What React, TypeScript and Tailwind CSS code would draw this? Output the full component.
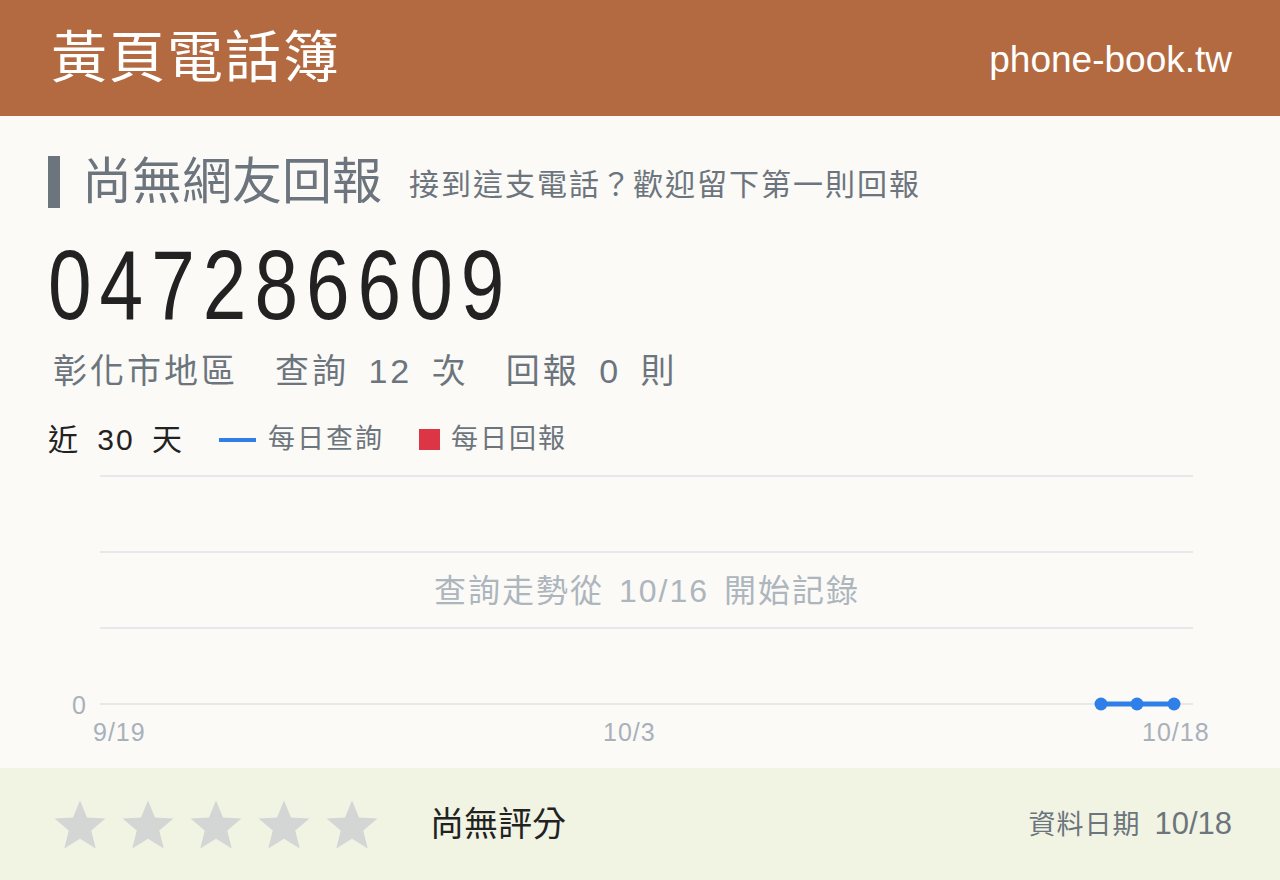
import React from "react";

const FONT = "font-['Liberation_Sans','Noto_Sans_CJK_TC',sans-serif]";

function Star() {
  return (
    <svg viewBox="0 0 24 24" className="w-[56px] h-[54px]" fill="#d4d6d5">
      <path d="M12 1.5l3.1 7.6 8.2.5-6.3 5.3 2 8-7-4.4-7 4.4 2-8L.7 9.6l8.2-.5z" />
    </svg>
  );
}

export default function App() {
  return (
    <div className={`w-[1280px] h-[880px] flex flex-col bg-[#fbfaf6] ${FONT}`}>
      <header className="h-[116px] shrink-0 bg-[#b46a40] flex items-center justify-between px-[48px]">
        <h1 className="text-[56px] text-white pl-[3px] tracking-[2px]">黃頁電話簿</h1>
        <span className="mt-[4px] text-[37px] text-white">phone-book.tw</span>
      </header>

      <main className="flex-1 px-[48px] pt-[38px]">
        <div className="flex items-center">
          <div className="w-[12px] h-[52px] bg-[#6c757d]" />
          <h2 className="ml-[22px] text-[50px] leading-[56px] text-[#6c757d]">尚無網友回報</h2>
          <p className="ml-[27px] mt-[4px] text-[30px] tracking-[2px] text-[#6c757d]">接到這支電話？歡迎留下第一則回報</p>
        </div>

        <div className="mt-[20px] h-[110px] text-[98px] leading-[110px] tracking-[10px] text-[#222222] origin-left scale-x-[0.8] whitespace-nowrap">
          047286609
        </div>

        <div className="mt-[6px] text-[34px] tracking-[3px] [word-spacing:7px] text-[#6c757d] pl-[5px]">
          彰化市地區　查詢 12 次　回報 0 則
        </div>

        <div className="mt-[20px] flex items-center">
          <span className="text-[30px] tracking-[2px] [word-spacing:7px] text-[#222222]">近 30 天</span>
          <span className="ml-[35px] w-[37px] h-[4px] bg-[#2f7fe8]" />
          <span className="ml-[12px] text-[27px] tracking-[2px] text-[#6c757d]">每日查詢</span>
          <span className="ml-[35px] w-[21px] h-[21px] bg-[#dc3545]" />
          <span className="ml-[11px] text-[27px] tracking-[2px] text-[#6c757d]">每日回報</span>
        </div>

        <div className="relative mt-[12px] h-[270px]">
          <svg width="1184" height="270" className="absolute left-0 top-0">
            {[0, 76, 152, 228].map((y) => (
              <line key={y} x1="52" x2="1145" y1={y + 2} y2={y + 2} stroke="#e6e8ec" strokeWidth="2" />
            ))}
            <polyline points="1053,230 1089,230 1126,230" fill="none" stroke="#2f7fe8" strokeWidth="5" />
            {[1053, 1089, 1126].map((x) => (
              <circle key={x} cx={x} cy="230" r="6.5" fill="#2f7fe8" />
            ))}
          </svg>
          <div className="absolute left-0 right-0 top-[93px] text-center text-[32px] tracking-[2px] [word-spacing:4px] text-[#adb5bd] pl-[14px]">
            查詢走勢從 10/16 開始記錄
          </div>
          <span className="absolute left-[24px] top-[213px] text-[25px] text-[#a8b1bb]">0</span>
          <span className="absolute left-[45px] top-[240px] text-[25px] tracking-[1px] text-[#a8b1bb]">9/19</span>
          <span className="absolute left-[555px] top-[240px] text-[25px] tracking-[1px] text-[#a8b1bb]">10/3</span>
          <span className="absolute left-[1094px] top-[240px] text-[25px] tracking-[1px] text-[#a8b1bb]">10/18</span>
        </div>
      </main>

      <footer className="h-[112px] shrink-0 bg-[#f1f4e3] flex items-center px-[48px]">
        <div className="flex gap-[12px] pl-[4px]">
          {[0, 1, 2, 3, 4].map((i) => (
            <Star key={i} />
          ))}
        </div>
        <span className="ml-[50px] text-[34px] text-[#222222]">尚無評分</span>
        <div className="ml-auto flex items-baseline text-[#6c757d]">
          <span className="text-[27px] tracking-[1px]">資料日期</span>
          <span className="ml-[14px] text-[31px]">10/18</span>
        </div>
      </footer>
    </div>
  );
}
